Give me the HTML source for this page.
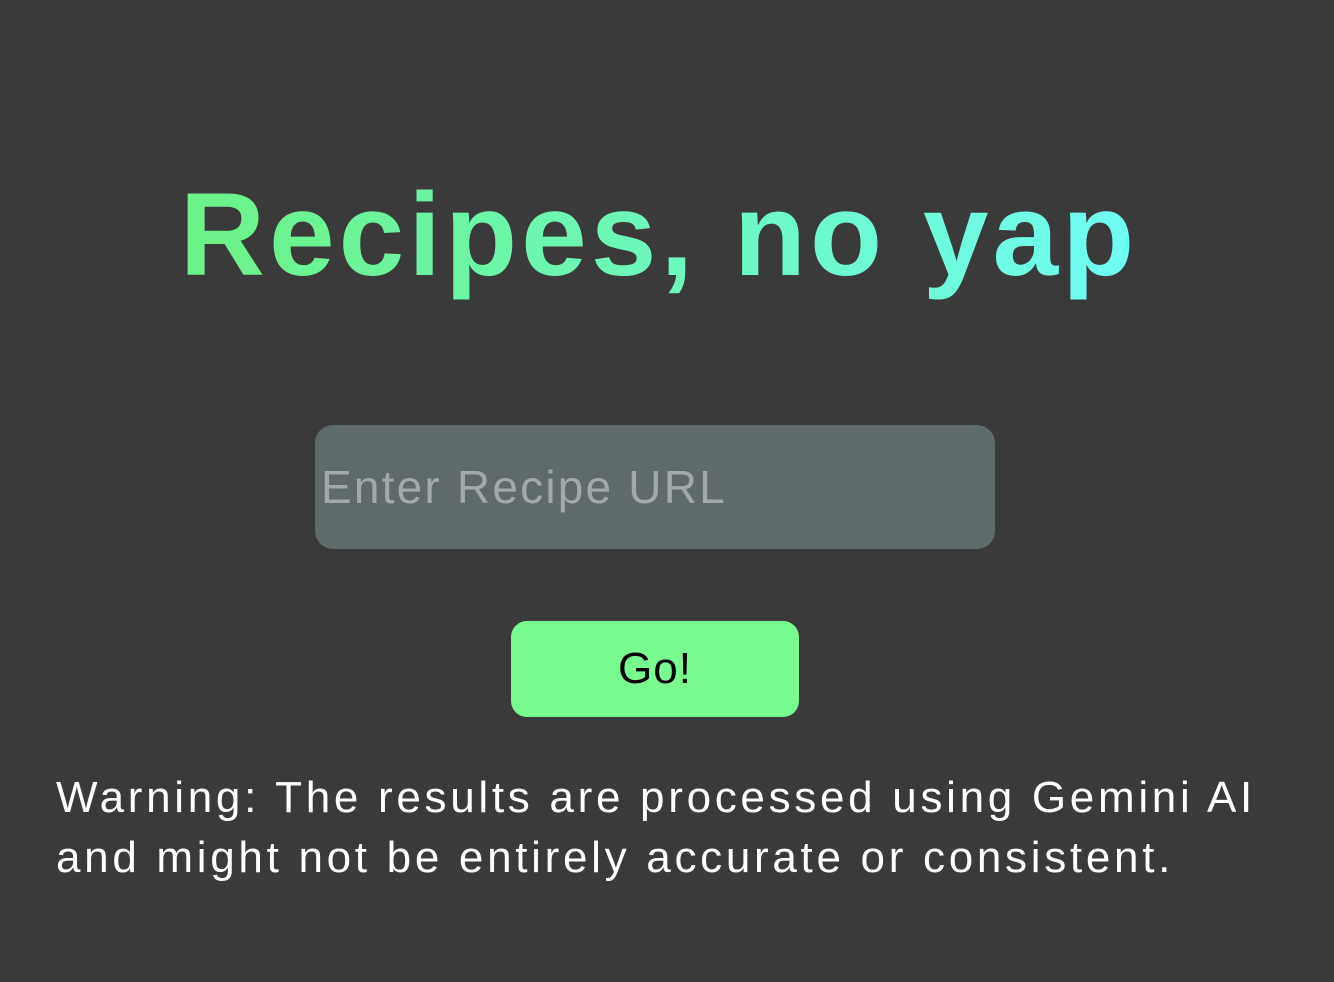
<!DOCTYPE html>
<html><head><meta charset="utf-8"><style>
html,body{margin:0;padding:0;width:1334px;height:982px;background:#3a3a3a;overflow:hidden;font-family:"Liberation Sans",sans-serif;}
h1{position:absolute;left:-8px;width:1334px;top:160px;margin:0;text-align:center;font-size:118px;font-weight:bold;line-height:150px;letter-spacing:4px;}
h1 span{background:linear-gradient(90deg,#6cf285,#6efdf3);-webkit-background-clip:text;background-clip:text;color:transparent;}
.inp{position:absolute;left:315px;top:425px;width:680px;height:124px;border-radius:18px;background:#5f6b6b;}
.inp span{position:absolute;left:6px;top:34px;font-size:46px;line-height:56px;color:#a3a8a8;letter-spacing:2.2px;}
.btn{position:absolute;left:511px;top:621px;width:288px;height:96px;border-radius:16px;background:#78fb8f;text-align:center;line-height:96px;font-size:44px;color:#000;letter-spacing:1px;}
.warn{position:absolute;left:56px;top:768px;width:1270px;font-size:44px;line-height:60px;color:#fff;letter-spacing:3.7px;}
</style></head><body>
<h1><span>Recipes, no yap</span></h1>
<div class="inp"><span>Enter Recipe URL</span></div>
<div class="btn">Go!</div>
<div class="warn">Warning: The results are processed using Gemini AI<br>and might not be entirely accurate or consistent.</div>
</body></html>
